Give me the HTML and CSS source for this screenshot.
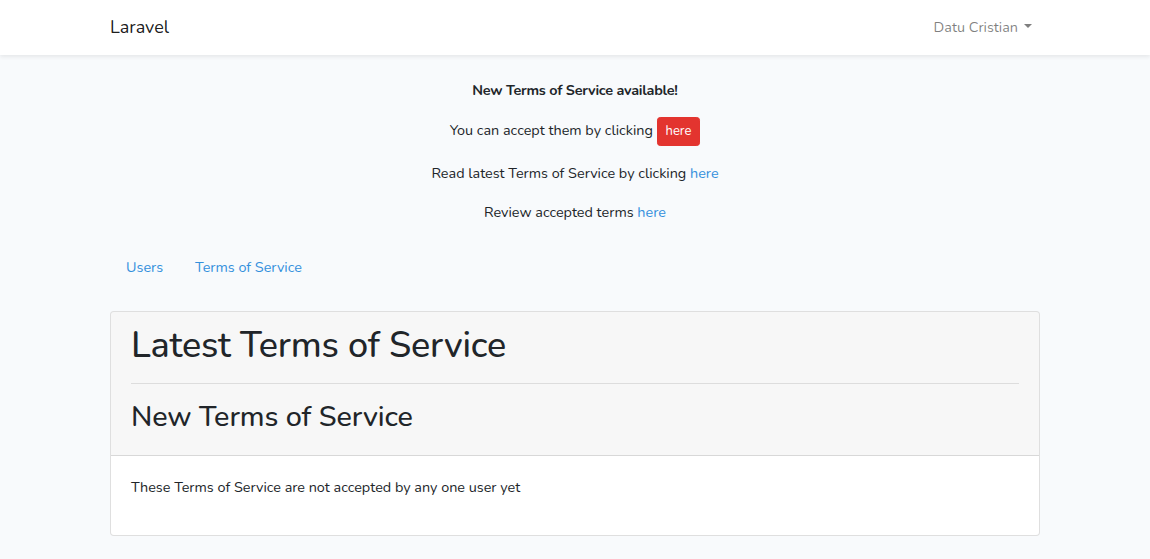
FILE: index.html
```html
<!DOCTYPE html>
<html lang="en">
<head>
<meta charset="utf-8">
<title>Laravel</title>
<link rel="stylesheet" href="styles.css">
</head>
<body>
<nav class="navbar">
  <div class="container navbar-inner">
    <a class="brand" href="#">Laravel</a>
    <a class="user-toggle" href="#">Datu Cristian<span class="caret"></span></a>
  </div>
</nav>
<main class="main">
  <div class="container">
    <div class="notice">
      <p><strong class="notice-title">New Terms of Service available!</strong></p>
      <p>You can accept them by clicking <a class="btn-danger" href="#">here</a></p>
      <p>Read latest Terms of Service by clicking <a class="link" href="#">here</a></p>
      <p>Review accepted terms <a class="link" href="#">here</a></p>
    </div>
    <ul class="tabs">
      <li><a class="tab-link" href="#">Users</a></li>
      <li><a class="tab-link" href="#">Terms of Service</a></li>
    </ul>
    <div class="card">
      <div class="card-header">
        <h1 class="title">Latest Terms of Service</h1>
        <hr class="divider">
        <h2 class="subtitle">New Terms of Service</h2>
      </div>
      <div class="card-body">
        <p>These Terms of Service are not accepted by any one user yet</p>
      </div>
    </div>
  </div>
</main>
</body>
</html>
```
FILE: styles.css
```css
* { box-sizing: border-box; }
html, body { margin: 0; padding: 0; }
body {
  font-family: "Nunito", "Lato", sans-serif;
  font-size: 14.4px;
  line-height: 1.6;
  color: #212529;
  background: #f8fafc;
}
a { text-decoration: none; }
p { margin: 0 0 16px; }
.container {
  width: 960px;
  margin: 0 auto;
  padding: 0 15px;
}
.navbar {
  background: #fff;
  box-shadow: 0 2px 4px rgba(0,0,0,.075);
  padding: 8px 0;
}
.navbar-inner {
  display: flex;
  align-items: center;
  justify-content: space-between;
}
.brand {
  color: rgba(0,0,0,.9);
  font-size: 18px;
  line-height: 28.8px;
  padding: 5px 0;
}
.user-toggle {
  color: rgba(0,0,0,.5);
  padding: 8px;
  line-height: 23px;
}
.caret {
  display: inline-block;
  margin-left: 6px;
  vertical-align: 0.255em;
  border-top: 0.3em solid;
  border-right: 0.3em solid transparent;
  border-left: 0.3em solid transparent;
  border-bottom: 0;
}
.main { padding: 24px 0; }
.notice { text-align: center; margin-bottom: 24px; }
.notice-title { letter-spacing: -0.25px; }
.btn-danger {
  display: inline-block;
  vertical-align: middle;
  background: #e3342f;
  color: #fff;
  border: 1px solid #e3342f;
  border-radius: 3.2px;
  font-size: 13px;
  line-height: 19px;
  padding: 4px 8px;
  margin: -1px 0 0;
}
.link { color: #3490dc; }
.tabs {
  list-style: none;
  margin: 0 0 24px;
  padding: 0;
  display: flex;
}
.tab-link {
  display: block;
  padding: 8px 16px;
  color: #3490dc;
}
.card {
  background: #fff;
  border: 1px solid rgba(0,0,0,.125);
  border-radius: 4px;
  overflow: hidden;
}
.card-header {
  background: rgba(0,0,0,.03);
  border-bottom: 1px solid rgba(0,0,0,.125);
  padding: 12px 20px;
}
.title {
  font-size: 36px;
  font-weight: 500;
  line-height: 1.2;
  letter-spacing: -0.2px;
  margin: 0 0 8px;
}
.divider {
  border: 0;
  border-top: 1px solid rgba(0,0,0,.1);
  margin: 16px 0;
}
.subtitle {
  font-size: 28.8px;
  font-weight: 500;
  line-height: 1.2;
  letter-spacing: -0.1px;
  margin: 0 0 8px;
}
.card-body { padding: 20px; }
```
